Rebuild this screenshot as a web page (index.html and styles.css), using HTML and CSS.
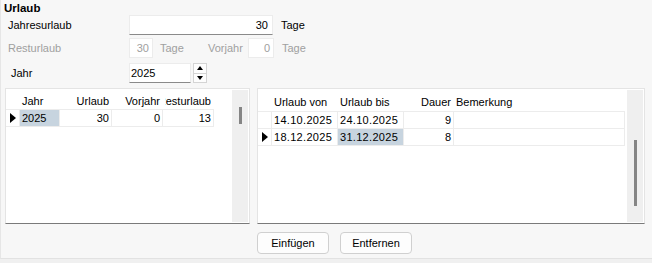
FILE: index.html
```html
<!DOCTYPE html>
<html lang="de">
<head>
  <meta charset="UTF-8" />
  <title>Urlaub</title>
  <link rel="stylesheet" href="styles.css">
</head>
<body>
  <div class="panel">
    <div class="title">Urlaub</div>

    <div class="row row-1">
      <label class="lbl">Jahresurlaub</label>
      <div class="field f-jahresurlaub">30</div>
      <span class="unit">Tage</span>
    </div>

    <div class="row row-2 disabled">
      <label class="lbl">Resturlaub</label>
      <div class="field f-small">30</div>
      <span class="unit unit-mid">Tage</span>
      <span class="lbl-vorjahr">Vorjahr</span>
      <div class="field f-vorjahr">0</div>
      <span class="unit">Tage</span>
    </div>

    <div class="row row-3">
      <label class="lbl lbl-jahr">Jahr</label>
      <div class="field f-jahr">2025</div>
      <div class="spin">
        <span class="spin-btn"><i class="tri-up"></i></span>
        <span class="spin-btn"><i class="tri-down"></i></span>
      </div>
    </div>

    <div class="grids">
      <div class="grid grid-left">
        <table>
          <colgroup>
            <col style="width:13px"><col style="width:40px"><col style="width:52px"><col style="width:51px"><col style="width:51px">
          </colgroup>
          <tr class="head">
            <td class="ind"></td>
            <td>Jahr</td>
            <td class="num">Urlaub</td>
            <td class="num">Vorjahr</td>
            <td class="num"><span class="clip">Resturlaub</span></td>
          </tr>
          <tr class="data">
            <td class="ind"><span class="arrow"></span></td>
            <td class="sel">2025</td>
            <td class="num">30</td>
            <td class="num">0</td>
            <td class="num">13</td>
          </tr>
        </table>
        <div class="vscroll"><span class="thumb thumb-left"></span></div>
      </div>

      <div class="grid grid-right">
        <table>
          <colgroup>
            <col style="width:13px"><col style="width:66px"><col style="width:66px"><col style="width:50px"><col style="width:171px">
          </colgroup>
          <tr class="head">
            <td class="ind"></td>
            <td>Urlaub von</td>
            <td>Urlaub bis</td>
            <td class="num">Dauer</td>
            <td>Bemerkung</td>
          </tr>
          <tr class="data">
            <td class="ind"></td>
            <td class="date">14.10.2025</td>
            <td class="date">24.10.2025</td>
            <td class="num">9</td>
            <td></td>
          </tr>
          <tr class="data">
            <td class="ind"><span class="arrow"></span></td>
            <td class="date">18.12.2025</td>
            <td class="date sel">31.12.2025</td>
            <td class="num">8</td>
            <td></td>
          </tr>
        </table>
        <div class="vscroll"><span class="thumb thumb-right"></span></div>
      </div>
    </div>

    <div class="buttons">
      <button type="button" class="btn">Einfügen</button>
      <button type="button" class="btn">Entfernen</button>
    </div>
  </div>
  <div class="footer"></div>
</body>
</html>
```

FILE: styles.css
```css
* { box-sizing: border-box; margin: 0; padding: 0; }
body {
  font-family: 'Liberation Sans', Arial, sans-serif;
  font-size: 11px;
  color: #000;
  background: #f0f0f0;
  width: 652px;
  height: 263px;
  overflow: hidden;
}
.panel {
  height: 259px;
  background: #f7f7f7;
  border-left: 1px solid #e6e6e6;
  border-bottom: 1px solid #e2e2e2;
  padding: 1px 0 0 3px;
}
.title {
  font-weight: bold;
  font-size: 11.5px;
  height: 14px;
  line-height: 14px;
}

/* form rows */
.row {
  display: flex;
  align-items: center;
  height: 20px;
}
.row-2 { margin-top: 3px; }
.row-3 { margin-top: 5px; }
.lbl {
  width: 125px;
  padding-left: 4px;
}
.lbl-jahr { padding-left: 7px; }
.field {
  height: 20px;
  line-height: 19px;
  background: #fff;
  border: 1px solid #ececec;
  border-bottom: 1px solid #8a8a8a;
  text-align: right;
  padding: 0 4px;
}
.f-jahresurlaub { width: 144px; }
.f-small { width: 24px; padding: 0 3px; }
.f-vorjahr { width: 26px; padding: 0 3px; }
.f-jahr { width: 62px; text-align: left; padding: 0 1px; }
.unit { margin-left: 8px; }
.unit-mid { margin-left: 7px; width: 48px; }
.lbl-vorjahr { width: 40px; }
.disabled { color: #a0a0a0; }
.disabled .field { border-bottom-color: #ececec; }

.spin {
  display: flex;
  flex-direction: column;
  margin-left: 2px;
  width: 14px;
  height: 20px;
}
.spin-btn {
  flex: 1;
  display: flex;
  align-items: center;
  justify-content: center;
  background: #fdfdfd;
  border: 1px solid #d4d4d4;
}
.spin-btn + .spin-btn { border-top: none; }
.tri-up, .tri-down {
  width: 0;
  height: 0;
  border-left: 3px solid transparent;
  border-right: 3px solid transparent;
}
.tri-up { border-bottom: 4px solid #000; }
.tri-down { border-top: 4px solid #000; }

/* grids */
.grids {
  display: flex;
  gap: 7px;
  margin-top: 5px;
  height: 136px;
  padding-left: 1px;
}
.grid {
  display: flex;
  justify-content: space-between;
  background: #fff;
  border: 1px solid #e4e4e4;
  border-bottom: 1px solid #7a7a7a;
  padding: 1px 1px 0 0;
}
.grid-left { width: 245px; }
.grid-right { width: 388px; }
table {
  table-layout: fixed;
  border-collapse: collapse;
  align-self: flex-start;
}
.grid-left table { width: 207px; }
.grid-right table { width: 366px; }
td {
  height: 17px;
  padding: 0 2px;
  white-space: nowrap;
  border: 1px solid #ececec;
  overflow: hidden;
}
.head td { border-color: #fff; border-bottom-color: #ececec; padding-top: 1px; }
.grid-left .head td { height: 19px; }
.grid-right .head td { height: 21px; }
.num { text-align: right; }
.ind { padding: 0; border-left-color: #fff; }
.sel { background: #c7d4df; }
.arrow {
  display: block;
  margin-left: 3px;
  width: 0;
  height: 0;
  border-top: 5px solid transparent;
  border-bottom: 5px solid transparent;
  border-left: 6px solid #000;
}
.clip { display: block; direction: rtl; overflow: hidden; text-align: left; }
.date { letter-spacing: 0.3px; }

.vscroll {
  position: relative;
  width: 16px;
  background: #efefef;
  margin-bottom: 1px;
}
.thumb {
  position: absolute;
  left: 7px;
  width: 3px;
  background: #858585;
}
.thumb-left { top: 17px; height: 17px; }
.thumb-right { top: 50px; height: 66px; }

/* buttons */
.buttons {
  display: flex;
  gap: 11px;
  margin-top: 8px;
  padding-left: 253px;
}
.btn {
  width: 72px;
  height: 22px;
  font-family: inherit;
  font-size: 11px;
  background: #fdfdfd;
  border: 1px solid #d0d0d0;
  border-radius: 4px;
  color: #000;
}
.footer {
  height: 4px;
  background: #f0f0f0;
}
```
